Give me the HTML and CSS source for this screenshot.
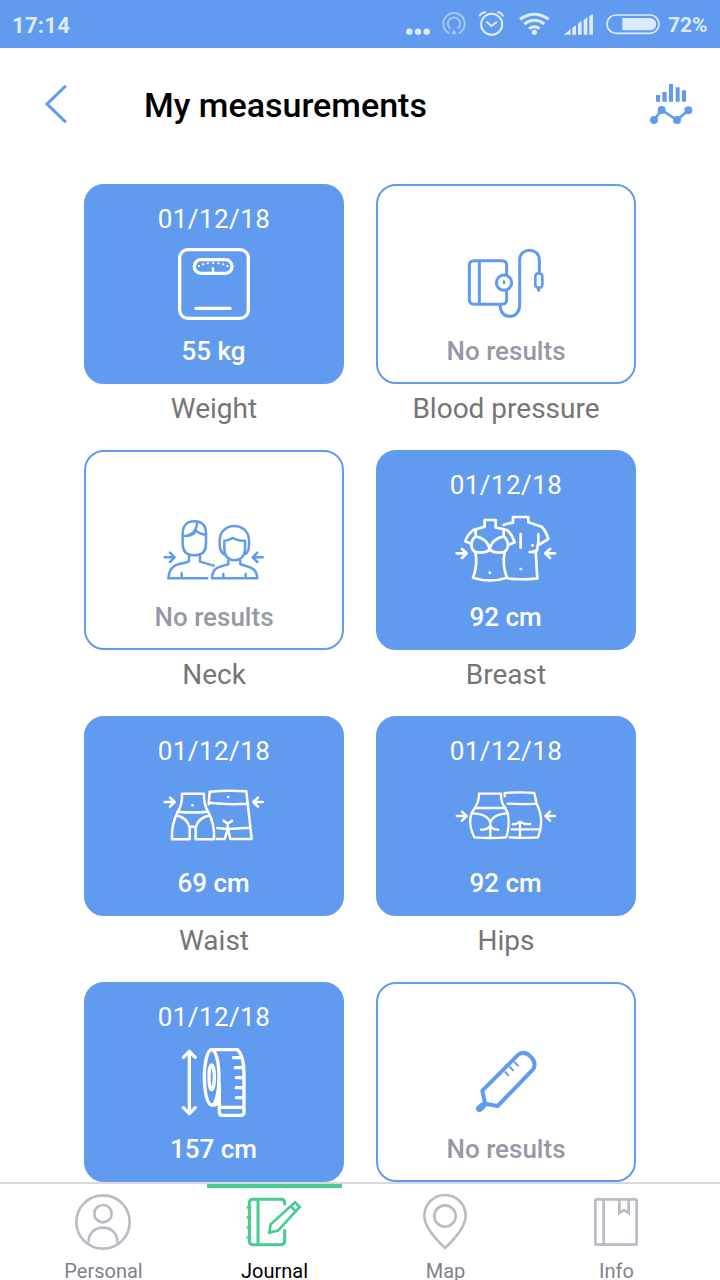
FILE: index.html
```html
<!DOCTYPE html>
<html lang="en">
<head>
    <meta charset="UTF-8">
    <meta name="viewport" content="width=device-width, initial-scale=1.0">
    <title>My measurements</title>
    <link rel="stylesheet" href="styles.css">
</head>
<body>
    <div class="status-bar">
        <span class="clock">17:14</span>
        <div class="status-icons">
            <svg class="dots" viewBox="48 0 72 144" fill="currentColor">
                <circle cx="58" cy="95" r="9.5"/><circle cx="84" cy="95" r="9.5"/><circle cx="110" cy="95" r="9.5"/>
            </svg>
            <svg class="cast" viewBox="156 0 72 144" fill="none" stroke="currentColor" stroke-width="6">
                <path d="M178 100a32 32 0 1 1 28 0"/>
                <path d="M181 86a18.500 18.500 0 1 1 22 0"/>
                <path d="M192 88l8 15h-16z" fill="currentColor" stroke="none"/>
            </svg>
            <svg class="alarm" viewBox="264 0 78 144" fill="none" stroke="currentColor" stroke-width="6" stroke-linecap="round">
                <circle cx="305" cy="73" r="31.500"/>
                <path d="M291 66l13 12 15-11M269 46q6-8 17-10M324 36q10 3 15 11"/>
            </svg>
            <svg class="wifi" viewBox="384 0 96 144" fill="none" stroke="currentColor" stroke-width="9">
                <path d="M390 58q43-31 86 0M403 72q30-22 60 0M417 86q16-12 32 0"/>
                <circle cx="433" cy="97" r="8" fill="currentColor" stroke="none"/>
            </svg>
            <svg class="signal" viewBox="519 0 93 144" fill="currentColor">
                <path d="M521 104l21-17v17zM547 83l11-7v28h-11zM564 71l11-8v41h-11zM581 60l11-8v52h-11zM598 48l11-6v62h-11z"/>
            </svg>
            <svg class="battery" viewBox="645 0 168 144">
                <rect x="651" y="45" width="156" height="55" rx="27" fill="none" stroke="currentColor" stroke-width="5"/>
                <path d="M697 54h83a18 18 0 0 1 0 37h-83z" fill="currentColor"/>
            </svg>
        </div>
        <span class="charge">72%</span>
    </div>

    <header class="header">
        <svg class="back" viewBox="132 246 72 132" fill="none" stroke="currentColor" stroke-width="9" stroke-linecap="round">
            <path d="M195 260l-54 52 54 52"/>
        </svg>
        <h1>My measurements</h1>
        <svg class="chart" viewBox="777 246 132 132" fill="currentColor">
            <path d="M798 285h12v20h-12zM817 276h13v29h-13zM837 252h12v53h-12zM857 262h12v43h-12zM876 271h12v34h-12z"/>
            <path d="M792 360l23-30 46 30 34-29" fill="none" stroke="currentColor" stroke-width="8"/>
            <circle cx="792" cy="360" r="12"/><circle cx="815" cy="330" r="12"/><circle cx="861" cy="360" r="12"/><circle cx="895" cy="331" r="12"/>
        </svg>
    </header>

    <main class="grid">
        <div class="item">
            <div class="card filled">
                <span class="date">01/12/18</span>
                <svg class="icon" viewBox="225 192 330 240" stroke-width="10">
                    <rect x="287" y="209" width="206" height="206" rx="25"/>
                    <rect x="331" y="239" width="113" height="41" rx="20"/>
                    <path d="M336 385h102"/>
                    <path d="M387 262v16" stroke-width="7" stroke-linecap="butt"/>
                    <path d="M344 258h1M357 253h1M371 250h1M387 249h1M403 250h1M417 253h1M430 258h1" stroke-width="6"/>
                </svg>
                <span class="value">55 kg</span>
            </div>
            <p class="name">Weight</p>
        </div>
        <div class="item">
            <div class="card">
                <svg class="icon" viewBox="225 192 330 240" stroke-width="9">
                    <path d="M392 282v-26q0-14-14-14h-83q-15 0-15 14v102q0 15 15 15h83q14 0 14-15v-25M310 242v131"/>
                    <circle cx="384" cy="308" r="23"/>
                    <path d="M384 300l3 7a3.500 3.500 0 1 1-6 0z" stroke-width="2" fill="currentColor"/>
                    <path d="M372 376c0 44 59 44 59 0v-136c0-39 59-39 59 0v38"/>
                    <rect x="478" y="280" width="21" height="43" rx="9" stroke-width="8"/>
                    <path d="M488 326v5"/>
                </svg>
                <span class="value">No results</span>
            </div>
            <p class="name">Blood pressure</p>
        </div>
        <div class="item">
            <div class="card">
                <svg class="icon" viewBox="27 30 330 240" stroke-width="7.500">
                    <path d="M44 172h28M60 158l14 14-14 14M338 172h-28M322 158l-14 14 14 14"/>
                    <path d="M98 108v23q0 35 35 35t35-35v-30q0-37-35-37-37 0-35 44 40 0 44-42M98 108c25 0 37-7 40-17 10 11 20 12 30 13"/>
                    <path d="M117 163v20q-5 5-30 9-30 7-32 43h117M150 163v22l41 12M95 220v15"/>
                    <path d="M223 164c-17-10-14-30-14-42 0-59 88-59 88 0 0 20 2 34-15 42M223 122c14 0 22-7 26-8 8 5 17 10 36 8v27q-3 31-31 32-31-2-31-34z"/>
                    <path d="M235 182v11c-31 8-48 10-49 42h136c-1-29-18-33-51-42v-11M220 222v13M287 222v13"/>
                </svg>
                <span class="value">No results</span>
            </div>
            <p class="name">Neck</p>
        </div>
        <div class="item">
            <div class="card filled">
                <span class="date">01/12/18</span>
                <svg class="icon" viewBox="33 30 330 240" stroke-width="8">
                    <path d="M50 160h29M66 147l14 13-14 14M345 160h-29M330 147l-14 13 14 14"/>
                    <path d="M134 60h33v22l34 8q13 10 23 37l-14 6M134 60v20l-34 10q-19 15-24 34l17 7"/>
                    <path d="M107 90v19M191 90v19M107 109c-11 8-14 21-12 34q5 15 23 15 25 0 31-11-7-31-42-38M191 109c11 8 14 21 12 34q-5 15-23 15-25 0-31-11 7-31 42-38"/>
                    <path d="M106 156q8 40-7 77 51 17 102 0-15-36-7-77M149 218h1"/>
                    <path d="M191 75q8-4 28-7V51h46v16l40 13q14 15 20 37l-27 17M295 102v22l-4 28q-6 4-22 4M287 152l5 83q-44 5-86 1M242 102v41M277 136h1M242 207h1"/>
                </svg>
                <span class="value">92 cm</span>
            </div>
            <p class="name">Breast</p>
        </div>
        <div class="item">
            <div class="card filled">
                <span class="date">01/12/18</span>
                <svg class="icon" viewBox="27 18 330 240" stroke-width="7.500">
                    <path d="M44 96h29M60 83l14 13-14 14M339 96h-29M324 83l-14 13 14 14"/>
                    <path d="M96 71h66q-2 29 12 54 21 37 18 83h-55v-35q-8-7-18 0v35H66q-2-48 18-83 14-25 12-54zM82 125q46 5 92 0M78 136q34 7 41 37M180 136q-36 7-43 37M127 106h1"/>
                    <path d="M176 103l3-38q56-5 110-1l16 143h-64l-7-30 64-4M176 98q58 7 118 3M234 81h1M202 174l31 3-9 30h-23M233 174v-13M221 152l12 9 13-9"/>
                </svg>
                <span class="value">69 cm</span>
            </div>
            <p class="name">Waist</p>
        </div>
        <div class="item">
            <div class="card filled">
                <span class="date">01/12/18</span>
                <svg class="icon" viewBox="33 18 330 240" stroke-width="7">
                    <path d="M50 138h29M66 125l14 13-14 14M345 138h-29M330 125l-14 13 14 14"/>
                    <path d="M117 71h66q-2 23 13 45 10 14 10 39 0 28-8 47-48 4-95 0-25-54 0-86 15-22 14-45zM105 114h92M98 130q47 2 53 29 6-27 53-29M151 159v42M123 179q21 1 28-12 7 13 24 12"/>
                    <path d="M194 79v-10q46-4 89 0l7 32q25 51 4 101-43 3-85 0M203 101q43 3 87 0M215 178h86M240 157v45M218 163q14-1 22-8 12 9 31 7"/>
                </svg>
                <span class="value">92 cm</span>
            </div>
            <p class="name">Hips</p>
        </div>
        <div class="item">
            <div class="card filled">
                <span class="date">01/12/18</span>
                <svg class="icon" viewBox="225 186 330 240" stroke-width="10">
                    <path d="M316 214v187M298 232l18-18 18 18M298 383l18 18 18-18"/>
                    <ellipse cx="383" cy="292" rx="22" ry="83"/>
                    <ellipse cx="383" cy="292" rx="8" ry="37"/>
                    <path d="M383 209h78q18 17 19 70v118q0 9-9 9h-57q-8 0-8-9v-85M406 382h72M386 375q14 0 18-11"/>
                    <path d="M448 233h22M454 263h22M457 293h22M457 323h22M457 353h22"/>
                </svg>
                <span class="value">157 cm</span>
            </div>
        </div>
        <div class="item">
            <div class="card">
                <svg class="icon" viewBox="225 186 330 240" stroke-width="12">
                    <path d="M319 332l108-108q19-13 37 6 19 19 7 38L365 378l-38-7z"/>
                    <path d="M310 386l10-9" stroke-width="20"/>
                    <path d="M388 276l9 10M402 261l9 10M416 247l10 10" stroke-width="6"/>
                </svg>
                <span class="value">No results</span>
            </div>
        </div>
    </main>

    <nav class="tabs">
        <a class="tab">
            <svg viewBox="219 66 180 180" stroke-width="8">
                <circle cx="309" cy="156" r="80"/>
                <circle cx="309" cy="131" r="26"/>
                <path d="M266 218c-4-60 90-60 86 0"/>
            </svg>
            <span>Personal</span>
        </a>
        <a class="tab active">
            <svg viewBox="732 66 180 180" stroke-width="9">
                <path d="M854 106v-7q0-11-11-11h-84q-11 0-11 11v114q0 11 11 11h84q11 0 11-11v-35M774 88v136"/>
                <path d="M740 112h14M740 142h14M740 172h14M740 202h14" stroke-width="7"/>
                <path d="M808 188l4-25 73-66 14 14-65 71zM872 109l14 13" stroke-width="8"/>
            </svg>
            <span>Journal</span>
        </a>
        <a class="tab">
            <svg viewBox="165 66 180 180" stroke-width="8">
                <path d="M255 234q-62-59-62-97a62 62 0 0 1 124 0q0 38-62 97z"/>
                <circle cx="255" cy="138" r="32"/>
            </svg>
            <span>Map</span>
        </a>
        <a class="tab">
            <svg viewBox="678 66 180 180" stroke-width="8">
                <rect x="706" y="88" width="124" height="136" rx="4"/>
                <path d="M731 88v136M778 90v39l14-9 14 9v-39"/>
            </svg>
            <span>Info</span>
        </a>
    </nav>
</body>
</html>
```
FILE: styles.css
```css
:root {
    --blue: #619bef;
    --green: #46cc8c;
    --grey: #b9bcc4;
}

* {
    box-sizing: border-box;
}

body {
    margin: 0;
    height: 1280px;
    display: flex;
    flex-direction: column;
    overflow: hidden;
    background: #fff;
    font-family: Roboto, "Liberation Sans", sans-serif;
}

svg {
    display: block;
    flex: none;
}

.status-bar {
    flex: none;
    height: 48px;
    padding: 0 12px;
    display: flex;
    align-items: center;
    background: var(--blue);
    color: #deebfe;
    font-size: 22px;
    font-weight: 700;
}

.clock {
    padding-top: 2px;
    letter-spacing: 0.3px;
}

.status-icons {
    display: flex;
    margin-left: auto;
}

.status-icons svg {
    height: 48px;
}

.dots { width: 24px; margin-right: 12px; }
.cast { width: 24px; margin-right: 12px; opacity: 0.55; }
.alarm { width: 26px; margin-right: 14px; }
.wifi { width: 32px; margin-right: 13px; }
.signal { width: 31px; margin-right: 11px; }
.battery { width: 56px; margin-right: 7px; }

.charge {
    width: 40px;
    padding-top: 2px;
    font-size: 21px;
}

.header {
    flex: none;
    height: 112px;
    padding: 0 27px 0 44px;
    display: flex;
    align-items: center;
    color: var(--blue);
}

.back {
    width: 24px;
    height: 44px;
}

.header h1 {
    margin: 2px auto 0 76px;
    color: #000;
    font-size: 34px;
    font-weight: 500;
}

.chart {
    width: 44px;
    height: 44px;
}

.grid {
    flex: 1;
    min-height: 0;
    overflow: hidden;
    display: grid;
    grid-template-columns: 260px 260px;
    grid-auto-rows: 266px;
    column-gap: 32px;
    justify-content: center;
    padding-top: 24px;
}

.card {
    height: 200px;
    display: flex;
    flex-direction: column;
    align-items: center;
    justify-content: flex-end;
    border: 2px solid var(--blue);
    border-radius: 20px;
    color: var(--blue);
    padding-bottom: 15px;
}

.card.filled {
    background: var(--blue);
    color: #fff;
}

.date {
    height: 32px;
    margin-bottom: 9px;
    line-height: 32px;
    font-size: 26px;
    letter-spacing: 0.4px;
}

.icon {
    width: 110px;
    height: 80px;
    fill: none;
    stroke: currentColor;
    stroke-linecap: round;
    stroke-linejoin: round;
}

.value {
    height: 32px;
    margin-top: 11px;
    line-height: 32px;
    font-size: 26px;
    font-weight: 500;
    color: #9599a5;
}

.filled .value {
    padding-right: 1px;
    color: #fff;
}

.name {
    margin: 8px 0 0;
    line-height: 34px;
    text-align: center;
    font-size: 28px;
    color: #757575;
}

.tabs {
    flex: none;
    height: 98px;
    padding: 0 18px;
    display: flex;
    border-top: 2px solid #d9d9dc;
}

.tab {
    flex: 1;
    display: flex;
    flex-direction: column;
    align-items: center;
    color: #7e828d;
    font-size: 20px;
    line-height: 24px;
}

.tab::before {
    content: "";
    flex: none;
    width: 135px;
    height: 4px;
}

.tab svg {
    width: 60px;
    height: 60px;
    margin: 4px 2px 7px 0;
    fill: none;
    stroke: var(--grey);
}

.tab.active {
    color: #000;
}

.tab.active::before {
    background: var(--green);
}

.tab.active svg {
    stroke: var(--green);
}
```
